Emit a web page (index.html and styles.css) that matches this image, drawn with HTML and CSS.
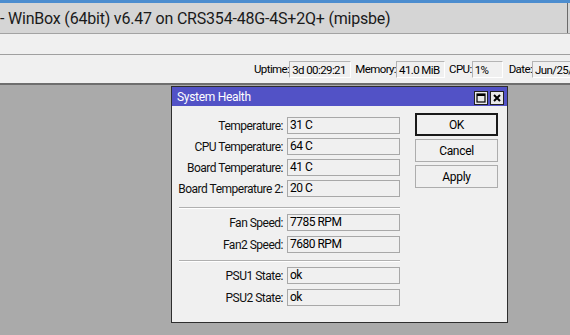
FILE: index.html
```html
<!DOCTYPE html>
<html lang="en">
<head>
    <meta charset="UTF-8">
    <title>WinBox - System Health</title>
    <link rel="stylesheet" href="styles.css">
</head>
<body>

<div class="app">
    <div class="titlebar">
        <span class="title">- WinBox (64bit) v6.47 on CRS354-48G-4S+2Q+ (mipsbe)</span>
        <span class="title-edge"></span>
    </div>
    <div class="toolbar"></div>
    <div class="statusbar">
        <span class="stat-label">Uptime:</span><span class="stat-box w-uptime">3d 00:29:21</span>
        <span class="stat-label">Memory:</span><span class="stat-box w-mem">41.0 MiB</span>
        <span class="stat-label">CPU:</span><span class="stat-box w-cpu">1%</span>
        <span class="stat-label">Date:</span><span class="stat-box w-date">Jun/25/2020</span>
    </div>

    <div class="workspace">
        <div class="dialog">
            <div class="dialog-title">
                <span>System Health</span>
                <div class="title-buttons">
                    <span class="tbtn">
                        <svg width="10" height="10" viewBox="0 0 10 10"><rect x="1" y="1" width="8" height="8" fill="none" stroke="#000" stroke-width="1.2"/><rect x="1" y="1" width="8" height="2" fill="#000"/></svg>
                    </span>
                    <span class="tbtn">
                        <svg width="10" height="10" viewBox="0 0 10 10"><path d="M2 2 L8 8 M8 2 L2 8" stroke="#000" stroke-width="2"/></svg>
                    </span>
                </div>
            </div>
            <div class="dialog-body">
                <div class="form">
                    <div class="group g1">
                        <div class="row"><label>Temperature:</label><span class="field">31 C</span></div>
                        <div class="row"><label>CPU Temperature:</label><span class="field">64 C</span></div>
                        <div class="row"><label>Board Temperature:</label><span class="field">41 C</span></div>
                        <div class="row"><label>Board Temperature 2:</label><span class="field">20 C</span></div>
                    </div>
                    <div class="sep s1"></div>
                    <div class="group">
                        <div class="row"><label>Fan Speed:</label><span class="field">7785 RPM</span></div>
                        <div class="row"><label>Fan2 Speed:</label><span class="field">7680 RPM</span></div>
                    </div>
                    <div class="sep s2"></div>
                    <div class="group">
                        <div class="row"><label>PSU1 State:</label><span class="field">ok</span></div>
                        <div class="row"><label>PSU2 State:</label><span class="field">ok</span></div>
                    </div>
                </div>
                <div class="buttons">
                    <button class="btn default">OK</button>
                    <button class="btn">Cancel</button>
                    <button class="btn">Apply</button>
                </div>
            </div>
        </div>
    </div>
</div>

</body>
</html>
```

FILE: styles.css
```css
/* general */
body {
    margin: 0;
    width: 570px;
    height: 335px;
    overflow: hidden;
    font-family: Roboto, "Liberation Sans", sans-serif;
    color: #000;
    background-color: #aaaaaa;
}

.app {
    display: flex;
    flex-direction: column;
    height: 335px;
}

/* window title */
.titlebar {
    height: 30px;
    border-top: 3px solid #4c8dcf;
    border-bottom: 1px solid #a3a3a3;
    background-color: #d5d5d5;
    display: flex;
    align-items: center;
    position: relative;
}

.title {
    font-size: 16px;
    letter-spacing: -0.2px;
    color: #1a1a1a;
    white-space: nowrap;
}

.title-edge {
    position: absolute;
    right: 2px;
    top: 0;
    bottom: 0;
    width: 1px;
    background-color: #6b6b6b;
}

.toolbar {
    height: 20px;
    background-color: #f0f0f0;
    border-bottom: 1px solid #a0a0a0;
}

/* status bar */
.statusbar {
    height: 28px;
    background-color: #f0f0f0;
    border-bottom: 2px solid #6e6e6e;
    display: flex;
    align-items: center;
    padding-left: 254px;
    font-size: 11.5px;
    letter-spacing: -0.6px;
    white-space: nowrap;
    overflow: hidden;
}

.stat-box {
    height: 17px;
    line-height: 16px;
    padding-left: 2px;
    border-top: 1px solid #b4b4b4;
    border-left: 1px solid #b4b4b4;
    border-right: 1px solid #ffffff;
    border-bottom: 1px solid #ffffff;
    margin-right: 4px;
    box-sizing: border-box;
    overflow: hidden;
    flex: none;
}

.w-uptime { width: 62px; }
.w-mem { width: 49px; }
.w-cpu { width: 31px; margin-right: 6px; }
.w-date { width: 70px; }

/* MDI area */
.workspace {
    flex: 1;
    position: relative;
    background-color: #aaaaaa;
}

.dialog {
    position: absolute;
    left: 171px;
    top: 1px;
    width: 337px;
    height: 237px;
    box-sizing: border-box;
    border: 1px solid #2e2e2e;
    background-color: #f0f0f0;
    display: flex;
    flex-direction: column;
}

.dialog-title {
    height: 19px;
    background-color: #5252c6;
    color: #fff;
    font-size: 12px;
    letter-spacing: -0.3px;
    display: flex;
    align-items: center;
    justify-content: space-between;
    padding-left: 5px;
    padding-right: 3px;
}

.title-buttons {
    display: flex;
    gap: 2px;
    margin-top: 3px;
}

.tbtn {
    width: 14px;
    height: 14px;
    box-sizing: border-box;
    border: 1px solid #202020;
    background-color: #e8e8e8;
    display: flex;
    align-items: center;
    justify-content: center;
}

.dialog-body {
    flex: 1;
    display: flex;
    padding: 11px 8px 0 6px;
    font-size: 12px;
    letter-spacing: -0.5px;
}

.form {
    display: flex;
    flex-direction: column;
}

.group {
    display: flex;
    flex-direction: column;
    gap: 5px;
}

.g1 {
    gap: 4px;
}

.row {
    display: grid;
    grid-template-columns: 105px 113px;
    column-gap: 4px;
    height: 17px;
    align-items: center;
}

.row label {
    text-align: right;
    white-space: nowrap;
    color: #111;
}

.field {
    height: 17px;
    line-height: 15px;
    box-sizing: border-box;
    border: 1px solid #a8a8a8;
    padding-left: 2px;
    background-color: #f0f0f0;
}

.sep {
    margin-left: 1px;
    height: 0;
    border-top: 1px solid #b0b0b0;
    border-bottom: 1px solid #ffffff;
}

.s1 {
    margin-top: 10px;
    margin-bottom: 5px;
}

.s2 {
    margin-top: 7px;
    margin-bottom: 5px;
}

/* buttons */
.buttons {
    display: flex;
    flex-direction: column;
    gap: 3px;
    margin-left: 15px;
    margin-top: -4px;
}

.btn {
    width: 83px;
    height: 23px;
    font-family: inherit;
    font-size: 12px;
    letter-spacing: -0.3px;
    background-color: #f0f0f0;
    border: 1px solid #adadad;
    padding: 0;
    color: #000;
}

.btn.default {
    border: 2px solid #1a1a1a;
}
```
